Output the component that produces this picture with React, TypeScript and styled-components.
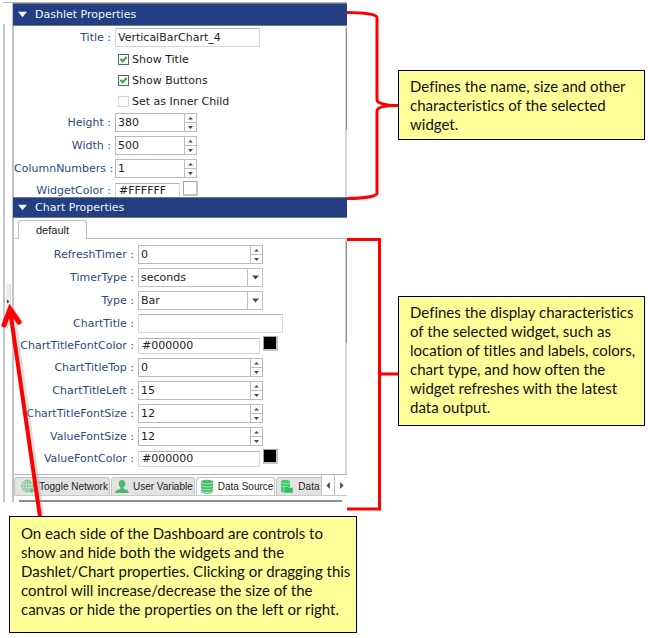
import React, { useId, useState } from "react";
import styled, { createGlobalStyle } from "styled-components";

const GlobalStyle = createGlobalStyle`
  *, *::before, *::after { box-sizing: border-box; }
  body { margin: 0; background: #fff; font-family: "DejaVu Sans", sans-serif; font-size: 11px; color: #222; }
  button, input, select { font: inherit; color: inherit; margin: 0; padding: 0; border-radius: 0; }
`;

const Page = styled.main`
  position: relative;
  padding: 2px 3px 6px 0;
`;

const Board = styled.div`
  display: grid;
  grid-template-columns: minmax(0, 1fr) 51px 247px;
`;

const Sidebar = styled.div`
  display: flex;
  height: 500px;
  margin-left: 3px;
  border-top: 1px solid #b4b4b4;
`;

const Splitter = styled.div`
  display: flex;
  flex: none;
  align-items: flex-start;
  width: 9px;
  margin-top: 21px;
  padding-top: 260px;
  border-left: 2px solid #c3c6cf;
`;

const SplitterHandle = styled.button`
  display: flex;
  align-items: center;
  justify-content: center;
  width: 5px;
  height: 34px;
  margin-left: 1px;
  border: 0;
  border-right: 1px solid #dcdcdc;
  background: #ececec;
`;

const Panels = styled.div`
  display: flex;
  flex: 1;
  flex-direction: column;
  min-width: 0;
  border-left: 2px solid #c0c3cc;
`;

const PanelHeader = styled.h2`
  display: flex;
  flex: none;
  align-items: center;
  gap: 8px;
  height: 21px;
  margin: 0 0 0 -1px;
  padding-left: 5px;
  border: solid #77797f;
  border-width: 1px 0;
  background: #233e83;
  color: #f4f6fb;
  font-size: 11px;
  font-weight: 400;
`;

const TopHeader = styled(PanelHeader)`
  height: 23px;
`;

const Scroller = styled.div<{ $height: number }>`
  display: flex;
  flex: none;
  height: ${(p) => p.$height}px;
  overflow: hidden;
`;

const Fields = styled.div<{ $labelWidth: number; $boxWidth: number; $colorWidth: number; $top: number }>`
  --label: ${(p) => p.$labelWidth}px;
  --box: ${(p) => p.$boxWidth}px;
  --color-box: ${(p) => p.$colorWidth}px;
  flex: 1;
  min-width: 0;
  padding-top: ${(p) => p.$top}px;
`;

const ScrollTrack = styled.div<{ $color: string }>`
  width: 2px;
  padding-top: 2px;
  border-left: 1px solid ${(p) => p.$color};
  background: #d8d8d8;
`;

const ScrollThumb = styled.div`
  height: 102px;
  background: #8f8f8f;
`;

const Row = styled.div<{ $short?: boolean }>`
  display: grid;
  grid-template-columns: var(--label) 1fr;
  column-gap: 4px;
  align-items: center;
  height: ${(p) => (p.$short ? 21 : 23)}px;
`;

const Label = styled.label`
  color: #2c4a7e;
  text-align: right;
  white-space: nowrap;
`;

const TextBox = styled.input`
  width: 145px;
  height: 19px;
  padding-left: 2px;
  border: 1px solid #d5d8e2;
  border-top-color: #b2b4bb;
  background: #fff;
`;

const ColorLine = styled.div`
  display: flex;
  align-items: center;
  gap: 3px;
`;

const ColorBox = styled(TextBox)`
  width: var(--color-box);
  height: 16px;
  padding-left: 3px;
`;

const Swatch = styled.button<{ $color: string }>`
  width: 15px;
  height: 15px;
  margin-bottom: 4px;
  border: 1px solid #a3a3a3;
  border-right: 2px solid #c4c4c4;
  border-bottom: 2px solid #c4c4c4;
  background: ${(p) => p.$color};
`;

const SpinBox = styled.div`
  display: flex;
  width: var(--box);
  height: 19px;
`;

const SpinInput = styled.input`
  flex: 1;
  min-width: 0;
  padding-left: 2px;
  border: 1px solid #b9b9b9;
  border-right: 0;
`;

const SpinButtons = styled.div`
  display: flex;
  flex-direction: column;
  width: 13px;
`;

const SpinButton = styled.button`
  display: flex;
  flex: 1;
  align-items: center;
  justify-content: center;
  min-height: 0;
  border: 1px solid #bcbcbc;
  background: #fff;
  color: #4a4a4a;
  & + & { border-top: 0; }
`;

const SelectBox = styled.div`
  position: relative;
  width: var(--box);
  height: 19px;
`;

const Select = styled.select`
  width: 100%;
  height: 100%;
  padding-left: 2px;
  appearance: none;
  border: 1px solid #c0c0c0;
  background: #fff;
`;

const SelectArrow = styled.span`
  position: absolute;
  inset: 1px 1px 1px auto;
  display: flex;
  align-items: center;
  justify-content: center;
  width: 15px;
  border-left: 1px solid #c0c0c0;
  color: #4a4a4a;
  pointer-events: none;
`;

const Checks = styled.div`
  display: grid;
  gap: 1px;
  padding-left: calc(var(--label) + 7px);
`;

const CheckRow = styled.label`
  display: flex;
  align-items: center;
  gap: 3px;
  height: 20px;
`;

const CheckCell = styled.span`
  position: relative;
  display: grid;
  width: 11px;
  height: 11px;
  svg { position: absolute; inset: 0; pointer-events: none; }
`;

const CheckInput = styled.input`
  width: 11px;
  height: 11px;
  appearance: none;
  border: 1px solid #d9d8cc;
  background: #fcfcfa;
  &:checked { border-color: #3c6a90; }
  &:not(:checked) + svg { display: none; }
`;

const TabStrip = styled.div`
  display: flex;
  flex: none;
  align-items: flex-end;
  height: 21px;
  padding-left: 4px;
  border-bottom: 1px solid #c2c2c2;
`;

const DefaultTab = styled.button`
  width: 69px;
  height: 19px;
  margin-bottom: -1px;
  border: 1px solid #bdbdbd;
  border-bottom: 0;
  border-radius: 3px 3px 0 0;
  background: #fff;
  font-family: "Liberation Sans", sans-serif;
  font-size: 11px;
`;

const BottomBar = styled.div`
  display: flex;
  flex: none;
  height: 22px;
  border-top: 1px solid #b2b2b2;
  border-bottom: 1px solid #c9c9c9;
  background: #fff;
`;

const BottomTabs = styled.div`
  display: flex;
  flex: 1;
  gap: 1px;
  min-width: 0;
  padding-top: 2px;
  overflow: hidden;
`;

const BottomTab = styled.button<{ $active?: boolean }>`
  display: flex;
  flex: none;
  align-items: center;
  gap: 4px;
  padding: 0 1px 0 3px;
  border: 1px solid #c4c4c4;
  border-bottom: 0;
  border-radius: 3px 3px 0 0;
  background: ${(p) => (p.$active ? "#fff" : "#e3e3e3")};
  font-family: "Liberation Sans", sans-serif;
  font-size: 10px;
  white-space: nowrap;
  &:first-child { padding-left: 6px; }
  &:last-child { flex: 1; padding-right: 0; border-right: 0; border-top-right-radius: 0; }
`;

const PagerButton = styled.button`
  display: flex;
  flex: none;
  align-items: center;
  justify-content: center;
  width: 13px;
  border: 0;
  border-left: 1px solid #c0c0c0;
  background: #fff;
  color: #4a4a4a;
`;

const PanelFoot = styled.div`
  height: 6px;
  margin: 0 5px;
  border-bottom: 2px solid #8e8e8e;
`;

const Brackets = styled.div`
  display: flex;
  flex-direction: column;
  gap: 37px;
  padding-top: 8px;
`;

const Notes = styled.div`
  display: flex;
  flex-direction: column;
  gap: 156px;
  padding-top: 68px;
`;

const Note = styled.p<{ $pad: string }>`
  margin: 0;
  padding: ${(p) => p.$pad};
  border: 1px solid #000;
  background: #ffff99;
  color: #111;
  font-family: Lato, sans-serif;
  font-size: 15px;
  font-variant-ligatures: none;
  line-height: 19px;
`;

const FootNote = styled(Note)`
  position: relative;
  margin: 5px 288px 0 9px;
`;

const PointerArrow = styled.svg`
  position: absolute;
  left: 0;
  top: 300px;
  pointer-events: none;
`;

const Triangle = ({ dir, size = 5 }: { dir: "up" | "down" | "left" | "right"; size?: number }) => {
  const shapes = {
    up: "M0 7 5 2 10 7Z",
    down: "M0 2 10 2 5 8Z",
    left: "M7 0 7 10 2 5Z",
    right: "M3 0 8 5 3 10Z",
  };
  return (
    <svg width={size} height={size} viewBox="0 0 10 10" fill="currentColor" aria-hidden="true">
      <path d={shapes[dir]} />
    </svg>
  );
};

const NetworkIcon = () => (
  <svg width="14" height="15" viewBox="0 0 14 15" fill="none" stroke="#80c795" aria-hidden="true">
    <circle cx="6.5" cy="7" r="5.8" />
    <ellipse cx="6.5" cy="7" rx="2.8" ry="5.8" />
    <path d="M.7 7h11.6M1.5 4h10M1.5 10h10M6.5 1v12" />
    <circle cx="10.5" cy="11.3" r="2.6" fill="#69c485" stroke="#e3e3e3" strokeWidth=".6" />
  </svg>
);

const UserIcon = () => (
  <svg width="14" height="15" viewBox="0 0 14 15" fill="#4cb96f" aria-hidden="true">
    <path d="M7 1c2.2 0 3.3 1.6 3.3 3.6 0 1.8-.7 3.2-1.8 4v1.2l3.9 1.5c.9.4 1.3 1.2 1.3 2.7H.3c0-1.5.4-2.3 1.3-2.7l3.9-1.5V8.6C4.4 7.800 3.700 6.400 3.700 4.600 3.700 2.600 4.800 1 7 1Z" />
  </svg>
);

const DatabaseIcon = () => (
  <svg width="14" height="15" viewBox="0 0 14 15" aria-hidden="true">
    <path d="M1 3c0-3 12-3 12 0v9.500c0 3-12 3-12 0Z" fill="#45bf68" />
    <path d="M1 3.400c1 2 11 2 12 0M1 6.400c1 2 11 2 12 0M1 9.400c1 2 11 2 12 0M1 12c1 2 11 2 12 0" fill="none" stroke="#c9efd3" strokeWidth=".8" />
  </svg>
);

const DataFolderIcon = () => (
  <svg width="14" height="15" viewBox="0 0 14 15" aria-hidden="true">
    <path d="M1 3c0-3 9-3 9 0v9c0 2-9 2-9 0Z" fill="#3fca6c" />
    <path d="M1 3.500c1 1.600 8 1.600 9 0M1 6.500c1 1.400 3 1.600 5 1.400" fill="none" stroke="#a6e6b9" strokeWidth=".8" />
    <path d="M4 7.500h3.500l1 1H13v5.500H4Z" fill="#2fc35f" stroke="#e3e3e3" strokeWidth=".5" />
  </svg>
);

const TextField = ({ label, value = "" }: { label: string; value?: string }) => {
  const id = useId();
  return (
    <Row>
      <Label htmlFor={id}>{label} :</Label>
      <TextBox id={id} defaultValue={value} />
    </Row>
  );
};

const SpinField = ({ label, value }: { label: string; value: number }) => {
  const id = useId();
  const [current, setCurrent] = useState(String(value));
  const step = (by: number) => setCurrent(String((Number(current) || 0) + by));
  return (
    <Row>
      <Label htmlFor={id}>{label} :</Label>
      <SpinBox>
        <SpinInput id={id} value={current} onChange={(e) => setCurrent(e.target.value)} />
        <SpinButtons>
          <SpinButton aria-label={`Increase ${label}`} onClick={() => step(1)}>
            <Triangle dir="up" />
          </SpinButton>
          <SpinButton aria-label={`Decrease ${label}`} onClick={() => step(-1)}>
            <Triangle dir="down" />
          </SpinButton>
        </SpinButtons>
      </SpinBox>
    </Row>
  );
};

const SelectField = ({ label, options }: { label: string; options: string[] }) => {
  const id = useId();
  return (
    <Row>
      <Label htmlFor={id}>{label} :</Label>
      <SelectBox>
        <Select id={id}>
          {options.map((o) => (
            <option key={o}>{o}</option>
          ))}
        </Select>
        <SelectArrow>
          <Triangle dir="down" size={7} />
        </SelectArrow>
      </SelectBox>
    </Row>
  );
};

const ColorField = ({ label, value }: { label: string; value: string }) => {
  const id = useId();
  return (
    <Row $short>
      <Label htmlFor={id}>{label} :</Label>
      <ColorLine>
        <ColorBox id={id} defaultValue={value} />
        <Swatch $color={value} aria-label={`Pick ${label}`} />
      </ColorLine>
    </Row>
  );
};

const CheckField = ({ label, checked = false }: { label: string; checked?: boolean }) => (
  <CheckRow>
    <CheckCell>
      <CheckInput type="checkbox" defaultChecked={checked} />
      <svg width="11" height="11" viewBox="0 0 11 11" fill="none" stroke="#35a035" strokeWidth="2" aria-hidden="true">
        <path d="M2.500 4.800 4.700 7.300 8.500 3" />
      </svg>
    </CheckCell>
    {label}
  </CheckRow>
);

export default function App() {
  return (
    <Page>
      <GlobalStyle />
      <Board>
        <Sidebar>
          <Splitter>
            <SplitterHandle aria-label="Toggle properties">
              <Triangle dir="right" />
            </SplitterHandle>
          </Splitter>
          <Panels>
            <TopHeader>
              <Triangle dir="down" size={9} />
              Dashlet Properties
            </TopHeader>
            <Scroller $height={171}>
              <Fields $labelWidth={97} $boxWidth={82} $colorWidth={65} $top={0}>
                <TextField label="Title" value="VerticalBarChart_4" />
                <Checks>
                  <CheckField label="Show Title" checked />
                  <CheckField label="Show Buttons" checked />
                  <CheckField label="Set as Inner Child" />
                </Checks>
                <SpinField label="Height" value={380} />
                <SpinField label="Width" value={500} />
                <SpinField label="ColumnNumbers" value={1} />
                <ColorField label="WidgetColor" value="#FFFFFF" />
              </Fields>
              <ScrollTrack $color="transparent">
                <ScrollThumb />
              </ScrollTrack>
            </Scroller>
            <PanelHeader>
              <Triangle dir="down" size={9} />
              Chart Properties
            </PanelHeader>
            <TabStrip>
              <DefaultTab>default</DefaultTab>
            </TabStrip>
            <Scroller $height={235}>
              <Fields $labelWidth={120} $boxWidth={125} $colorWidth={122} $top={4}>
                <SpinField label="RefreshTimer" value={0} />
                <SelectField label="TimerType" options={["seconds", "minutes", "hours"]} />
                <SelectField label="Type" options={["Bar", "Line", "Pie"]} />
                <TextField label="ChartTitle" />
                <ColorField label="ChartTitleFontColor" value="#000000" />
                <SpinField label="ChartTitleTop" value={0} />
                <SpinField label="ChartTitleLeft" value={15} />
                <SpinField label="ChartTitleFontSize" value={12} />
                <SpinField label="ValueFontSize" value={12} />
                <ColorField label="ValueFontColor" value="#000000" />
              </Fields>
              <ScrollTrack $color="#cfcfcf">
                <ScrollThumb />
              </ScrollTrack>
            </Scroller>
            <BottomBar>
              <BottomTabs>
                <BottomTab>
                  <NetworkIcon />
                  Toggle Network
                </BottomTab>
                <BottomTab>
                  <UserIcon />
                  User Variable
                </BottomTab>
                <BottomTab $active>
                  <DatabaseIcon />
                  Data Source
                </BottomTab>
                <BottomTab>
                  <DataFolderIcon />
                  Data
                </BottomTab>
              </BottomTabs>
              <PagerButton aria-label="Previous tabs">
                <Triangle dir="left" size={7} />
              </PagerButton>
              <PagerButton aria-label="Next tabs">
                <Triangle dir="right" size={7} />
              </PagerButton>
            </BottomBar>
            <PanelFoot />
          </Panels>
        </Sidebar>
        <Brackets>
          <svg width="51" height="191" viewBox="0 0 51 191" fill="none" stroke="#f00" strokeWidth="3" aria-hidden="true">
            <path d="M0 2.500C16 2.500 30 4 30 7.500V90C30 93 38 95.500 51 95.500C38 95.500 30 97 30 101V183C30 186.500 16 188.500 0 188.500" />
          </svg>
          <svg width="51" height="273" viewBox="0 0 51 273" fill="none" stroke="#f00" strokeWidth="3" aria-hidden="true">
            <path d="M0 1.500H32.500V271H0M32.500 136H51" />
          </svg>
        </Brackets>
        <Notes>
          <Note $pad="6px 4px 5px 11px">
            Defines the name, size and other characteristics of the selected widget.
          </Note>
          <Note $pad="6px 4px 8px 11px">
            Defines the display characteristics of the selected widget, such as location of titles and labels,
            colors, chart type, and how often the widget refreshes with the latest data output.
          </Note>
        </Notes>
      </Board>
      <PointerArrow width="50" height="217" viewBox="0 0 50 217" fill="none" stroke="#f00" aria-hidden="true">
        <path d="M13 12 42 217M5 28 12 10 22 24" stroke="#999" strokeOpacity=".3" strokeWidth="5" />
        <path d="M10 10 40 217" strokeWidth="4" />
        <path d="M4 25 10 9 19 22" strokeWidth="5" strokeLinecap="round" strokeLinejoin="miter" />
      </PointerArrow>
      <FootNote $pad="7px 4px 13px 11px">
        On each side of the Dashboard are controls to show and hide both the widgets and the Dashlet/Chart
        properties. Clicking or dragging this control will increase/decrease the size of the canvas or hide
        the properties on the left or right.
      </FootNote>
    </Page>
  );
}
